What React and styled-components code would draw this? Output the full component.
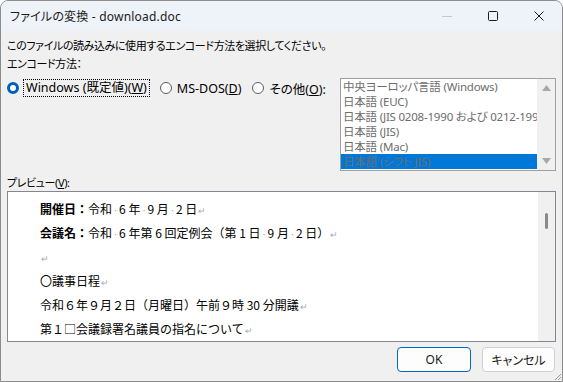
import styled, { createGlobalStyle } from "styled-components";

const GlobalStyle = createGlobalStyle`
    body {
        margin: 0;
        background: #ffffff;
    }
    * {
        box-sizing: border-box;
    }
`;

const uiFont = `"Noto Sans", "Noto Sans CJK JP", sans-serif`;

const encodings = [
    "中央ヨーロッパ言語 (Windows)",
    "日本語 (EUC)",
    "日本語 (JIS 0208-1990 および 0212-1990)",
    "日本語 (JIS)",
    "日本語 (Mac)",
    "日本語 (シフト JIS)",
];

function Dot() {
    return <SpaceMark>·</SpaceMark>;
}

function Ret() {
    return <ReturnMark>↵</ReturnMark>;
}

export default function App() {
    return (
        <Window>
            <GlobalStyle />
            <TitleBar>
                <Title>ファイルの変換 - download.doc</Title>
                <Controls>
                    <Control>
                        <svg width="10" height="10" viewBox="0 0 10 10">
                            <line x1="0" y1="5.5" x2="10" y2="5.5" stroke="#c4c6ca" strokeWidth="1" />
                        </svg>
                    </Control>
                    <Control>
                        <svg width="10" height="10" viewBox="0 0 10 10">
                            <rect x="0.5" y="0.5" width="9" height="9" rx="1" fill="none" stroke="#1b1b1b" strokeWidth="1" />
                        </svg>
                    </Control>
                    <Control>
                        <svg width="10" height="10" viewBox="0 0 10 10">
                            <path d="M0.5 0.5 L9.5 9.5 M9.5 0.5 L0.5 9.5" stroke="#1b1b1b" strokeWidth="1" />
                        </svg>
                    </Control>
                </Controls>
            </TitleBar>

            <Body>
                <Line>このファイルの読み込みに使用するエンコード方法を選択してください。</Line>
                <Line $gap={2}>エンコード方法：</Line>

                <EncodingRow>
                    <Radios>
                        <Radio>
                            <RadioDot $checked />
                            <FocusBox>Windows (既定値)(<u>W</u>)</FocusBox>
                        </Radio>
                        <Radio>
                            <RadioDot />
                            <span>MS-DOS(<u>D</u>)</span>
                        </Radio>
                        <Radio>
                            <RadioDot />
                            <span>その他(<u>O</u>):</span>
                        </Radio>
                    </Radios>

                    <ListBox>
                        <Items>
                            {encodings.map((name, i) => (
                                <Item key={name} $selected={i === encodings.length - 1}>{name}</Item>
                            ))}
                        </Items>
                        <ListScroll>
                            <svg width="9" height="6" viewBox="0 0 9 6"><path d="M0 6 L4.5 0 L9 6 Z" fill="#a8a8a8" /></svg>
                            <svg width="9" height="6" viewBox="0 0 9 6"><path d="M0 0 L4.5 6 L9 0 Z" fill="#a8a8a8" /></svg>
                        </ListScroll>
                    </ListBox>
                </EncodingRow>

                <Line $gap={4}>プレビュー(<u>V</u>):</Line>

                <Preview>
                    <Doc>
                        <DocLine><b>開催日：</b>令和<Dot />6 年<Dot />9 月<Dot />2 日<Ret /></DocLine>
                        <DocLine><b>会議名：</b>令和<Dot />6 年第 6 回定例会（第 1 日<Dot />9 月<Dot />2 日）<Ret /></DocLine>
                        <DocLine><Ret /></DocLine>
                        <DocLine>〇議事日程<Ret /></DocLine>
                        <DocLine>令和６年９月２日（月曜日）午前９時 30 分開議<Ret /></DocLine>
                        <DocLine>第１□会議録署名議員の指名について<Ret /></DocLine>
                    </Doc>
                    <PreviewScroll>
                        <Thumb />
                    </PreviewScroll>
                </Preview>

                <Buttons>
                    <Button $primary>OK</Button>
                    <Button>キャンセル</Button>
                </Buttons>
            </Body>

            <Grip width="10" height="10" viewBox="0 0 10 10">
                <path d="M9 3 L3 9 M9 6 L6 9" stroke="#9a9a9a" strokeWidth="1" />
            </Grip>
        </Window>
    );
}

const Window = styled.div`
    position: relative;
    width: 563px;
    height: 382px;
    display: flex;
    flex-direction: column;
    border: 1px solid #8c8c8c;
    border-radius: 8px 8px 0 0;
    overflow: hidden;
    background-color: #f0f0f0;
    font-family: ${uiFont};
    font-size: 12px;
    color: #000000;
`;

const TitleBar = styled.header`
    height: 30px;
    display: flex;
    align-items: center;
    justify-content: space-between;
    padding-left: 9px;
    background-color: #eef2f9;
`;

const Title = styled.span`
    font-size: 12px;
    color: #1b1b1b;
    letter-spacing: 0.2px;
    font-feature-settings: "palt";
`;

const Controls = styled.div`
    display: flex;
    height: 100%;
`;

const Control = styled.div`
    width: 46px;
    height: 100%;
    display: flex;
    align-items: center;
    justify-content: center;
`;

const Body = styled.main`
    flex: 1;
    display: flex;
    flex-direction: column;
    padding: 7px 6px 0 6px;
`;

const Line = styled.div`
    height: 16px;
    line-height: 16px;
    margin-top: ${(p) => p.$gap || 0}px;
    font-size: 11px;
    font-feature-settings: "palt";
    letter-spacing: -0.4px;
    white-space: nowrap;
`;

const EncodingRow = styled.div`
    display: flex;
    justify-content: space-between;
    align-items: flex-start;
    margin-top: 6px;
`;

const Radios = styled.div`
    display: flex;
    align-items: center;
    gap: 11px;
    margin-top: 1px;
`;

const Radio = styled.label`
    display: flex;
    align-items: center;
    gap: 5px;
    height: 18px;
    white-space: nowrap;
    font-size: 12.5px;
    font-feature-settings: "palt";
`;

const RadioDot = styled.span`
    width: 12px;
    height: 12px;
    border-radius: 50%;
    border: ${(p) => (p.$checked ? "3.5px solid #005fb8" : "1px solid #5b5b5b")};
    background-color: #ffffff;
`;

const FocusBox = styled.span`
    padding: 0 2px;
    line-height: 16px;
    outline: 1px dotted #000000;
`;

const ListBox = styled.div`
    width: 216px;
    height: 93px;
    display: flex;
    border: 1px solid #a0a0a0;
    background-color: #ffffff;
`;

const Items = styled.ul`
    flex: 1;
    min-width: 0;
    margin: 0;
    padding: 0;
    list-style: none;
    overflow: hidden;
`;

const Item = styled.li`
    height: 15px;
    line-height: 15px;
    padding-left: 2px;
    font-size: 11.5px;
    letter-spacing: -0.2px;
    font-feature-settings: "palt";
    white-space: nowrap;
    overflow: hidden;
    color: #6d6d6d;
    background-color: ${(p) => (p.$selected ? "#0078d7" : "transparent")};
`;

const ListScroll = styled.div`
    width: 18px;
    display: flex;
    flex-direction: column;
    align-items: center;
    justify-content: space-between;
    padding: 6px 0;
    background-color: #f0f0f0;
`;

const Preview = styled.div`
    height: 151px;
    display: flex;
    border: 1px solid #828790;
    background-color: #ffffff;
`;

const Doc = styled.div`
    flex: 1;
    padding: 5px 0 0 32px;
    font-family: "Noto Sans CJK JP", sans-serif;
    font-size: 12px;
    overflow: hidden;
`;

const DocLine = styled.div`
    height: 24px;
    line-height: 24px;
    white-space: nowrap;
    b {
        font-weight: 600;
    }
`;

const SpaceMark = styled.span`
    color: #9a9a9a;
    font-size: 9px;
    padding: 0 1px;
`;

const ReturnMark = styled.span`
    color: #a7a9b5;
    font-size: 9px;
    margin-left: 1px;
`;

const PreviewScroll = styled.div`
    width: 17px;
    padding-top: 21px;
    display: flex;
    justify-content: center;
    background-color: #f0f0f0;
`;

const Thumb = styled.div`
    width: 3px;
    height: 16px;
    border-radius: 2px;
    background-color: #8a8a8a;
`;

const Buttons = styled.div`
    display: flex;
    justify-content: flex-end;
    gap: 11px;
    margin-top: 5px;
    padding-right: 1px;
`;

const Button = styled.button`
    width: ${(p) => (p.$primary ? 74 : 73)}px;
    height: 25px;
    font-family: ${uiFont};
    font-size: 12px;
    color: #1b1b1b;
    border: 1px solid ${(p) => (p.$primary ? "#0067c0" : "#d0d0d0")};
    border-radius: 4px;
    background-color: #fdfdfd;
    font-feature-settings: "palt";
`;

const Grip = styled.svg`
    position: absolute;
    right: 0;
    bottom: 0;
`;
